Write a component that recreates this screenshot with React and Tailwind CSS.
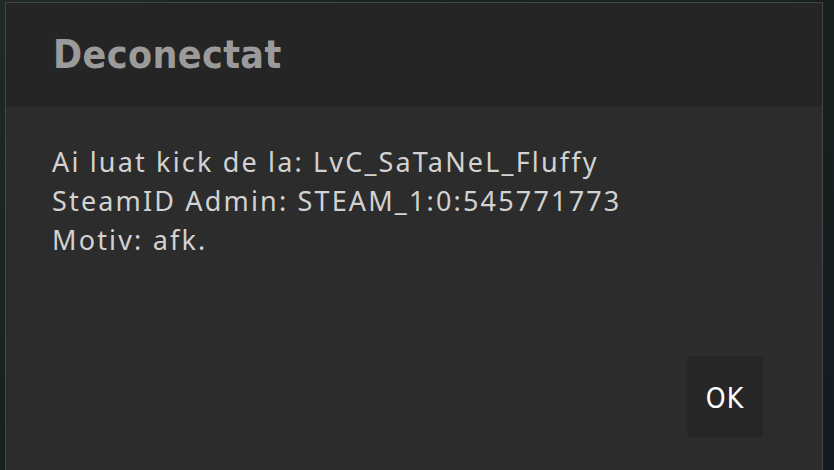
import React from 'react';

const lines = [
  'Ai luat kick de la: LvC_SaTaNeL_Fluffy',
  'SteamID Admin: STEAM_1:0:545771773',
  'Motiv: afk.',
];

const App = () => {
  return (
    <div className="h-[470px] w-[834px] overflow-hidden bg-gradient-to-br from-[#1f2a24] via-[#18201c] to-[#141a20] pl-[5px] pt-[2px]">
      <div className="flex h-[500px] w-[818px] flex-col border border-[#454545] bg-[#2c2c2c]">
        <div className="flex h-[104px] items-center bg-[#252525] pl-[47px]">
          <h1 className="font-['DejaVu_Sans_Condensed',sans-serif] text-[39px] font-bold tracking-[0.01em] text-[#9b9b9b]">
            Deconectat
          </h1>
        </div>
        <div className="flex flex-1 flex-col px-[46px] pt-[35px]">
          <div className="font-['Noto_Sans',sans-serif] text-[27px] leading-[39px] tracking-[0.08em] text-[#d2d2d2]">
            {lines.map((line, idx) => (
              <p key={idx}>{line}</p>
            ))}
          </div>
          <div className="mr-[13px] mt-[97px] flex justify-end">
            <button className="flex h-[81px] w-[76px] items-center justify-center rounded-[2px] bg-[#262626] pt-[4px] font-['DejaVu_Sans_Condensed',sans-serif] text-[28px] tracking-[0.04em] text-white">
              OK
            </button>
          </div>
        </div>
      </div>
    </div>
  );
};

export default App;
